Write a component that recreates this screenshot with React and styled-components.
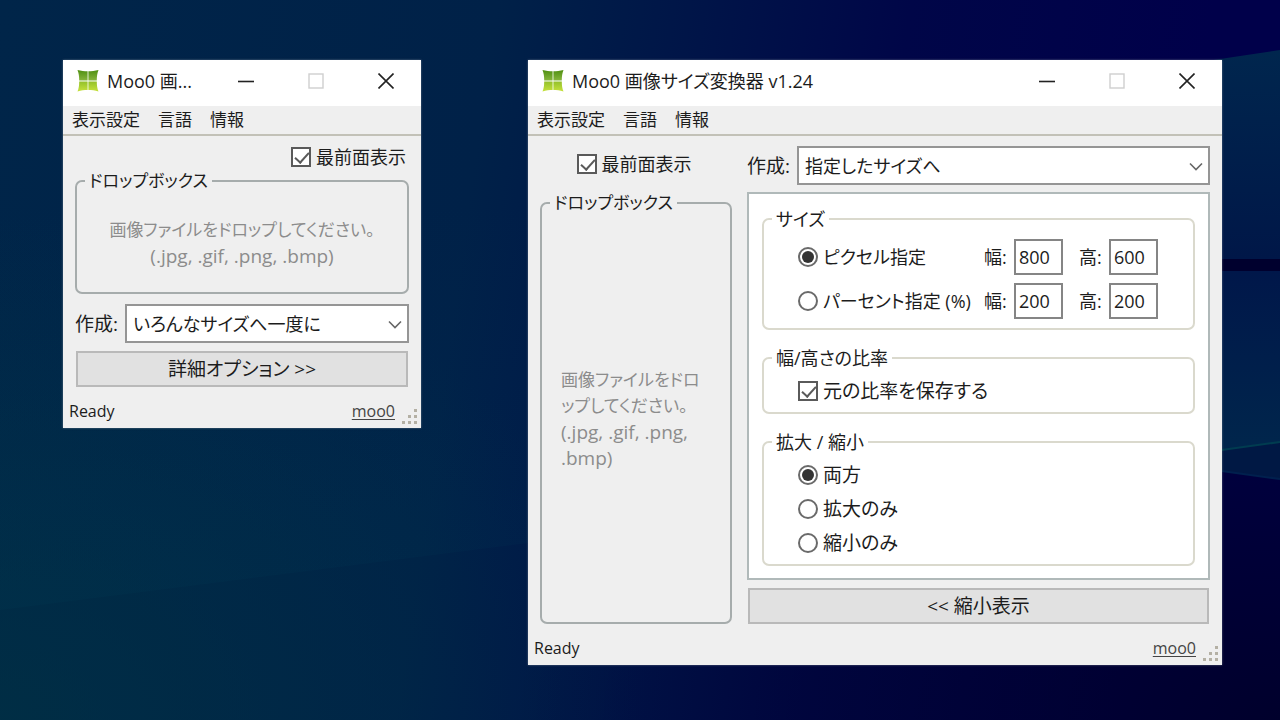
import React, { useState } from 'react';
import styled, { createGlobalStyle } from 'styled-components';

const GlobalStyle = createGlobalStyle`
  * {
    box-sizing: border-box;
  }

  body {
    margin: 0;
    background: #001a42;
    font-family: "Open Sans", "Noto Sans CJK JP", sans-serif;
    font-size: 18px;
    line-height: 24px;
    color: #1c1c1c;
    font-feature-settings: "palt";
  }

  button, input, select {
    font: inherit;
    font-feature-settings: inherit;
    color: inherit;
    margin: 0;
  }
`;

const Logo = () => (
  <svg width="22" height="22" viewBox="0 0 22 22" aria-hidden="true">
    <defs>
      <linearGradient id="leafTop" x1="0" y1="0" x2="0" y2="1">
        <stop offset="0" stopColor="#4f8f12" />
        <stop offset="1" stopColor="#86b53c" />
      </linearGradient>
      <linearGradient id="leafBottom" x1="0" y1="0" x2="0" y2="1">
        <stop offset="0" stopColor="#93c02a" />
        <stop offset="1" stopColor="#c6e23c" />
      </linearGradient>
    </defs>
    <path fill="url(#leafTop)" d="M0.5 0C4 1 7.5 1.2 10.6 1.2V10.4H2.2C2.2 7 1.8 3 0.5 0Z" />
    <path fill="url(#leafTop)" d="M21.5 0C18 1 14.5 1.2 11.4 1.2V10.4H19.8C19.8 7 20.2 3 21.5 0Z" />
    <path fill="url(#leafBottom)" d="M2.2 11.4H10.6V20C7.5 20 4 20.4 0.5 21.5C1.8 18.5 2.2 15 2.2 11.4Z" />
    <path fill="url(#leafBottom)" d="M19.8 11.4H11.4V20C14.5 20 18 20.4 21.5 21.5C20.2 18.5 19.8 15 19.8 11.4Z" />
  </svg>
);

const TitleBar = ({ title }) => (
  <TitleRow>
    <Logo />
    <Title>{title}</Title>
    <CaptionButton aria-label="最小化">
      <svg width="16" height="16" viewBox="0 0 16 16"><path d="M0 8.5H16" stroke="#222" strokeWidth="1.6" /></svg>
    </CaptionButton>
    <CaptionButton aria-label="最大化" disabled>
      <svg width="16" height="16" viewBox="0 0 16 16"><rect x="1" y="1" width="14" height="14" fill="none" stroke="#cfcfcf" strokeWidth="1.4" /></svg>
    </CaptionButton>
    <CaptionButton aria-label="閉じる">
      <svg width="16" height="16" viewBox="0 0 16 16"><path d="M0.5 0.5L15.5 15.5M15.5 0.5L0.5 15.5" stroke="#222" strokeWidth="1.6" /></svg>
    </CaptionButton>
  </TitleRow>
);

const Menu = () => (
  <MenuBar>
    <MenuButton>表示設定</MenuButton>
    <MenuButton>言語</MenuButton>
    <MenuButton>情報</MenuButton>
  </MenuBar>
);

const Status = () => (
  <StatusBar>
    <span>Ready</span>
    <StatusLink href="#moo0">moo0</StatusLink>
    <svg width="17" height="17" viewBox="0 0 17 17" fill="#b4b0a4" aria-hidden="true">
      <path d="M12 1h3v3h-3zM6 7h3v3H6zM12 7h3v3h-3zM0 13h3v3H0zM6 13h3v3H6zM12 13h3v3h-3z" />
    </svg>
  </StatusBar>
);

const Combo = ({ id, options }) => (
  <ComboRow>
    <ComboLabel htmlFor={id}>作成:</ComboLabel>
    <SelectWrap>
      <Select id={id}>
        {options.map(o => <option key={o}>{o}</option>)}
      </Select>
      <Chevron width="14" height="9" viewBox="0 0 14 9" aria-hidden="true">
        <path d="M1 1.5L7 7.5L13 1.5" fill="none" stroke="#666" strokeWidth="1.6" />
      </Chevron>
    </SelectWrap>
  </ComboRow>
);

const App = () => {
  const [top, setTop] = useState(true);
  const [keep, setKeep] = useState(true);
  const [unit, setUnit] = useState('pixel');
  const [mode, setMode] = useState('both');

  const units = [
    { id: 'pixel', label: 'ピクセル指定', w: '800', h: '600' },
    { id: 'percent', label: 'パーセント指定 (%)', w: '200', h: '200' },
  ];

  const modes = [
    { id: 'both', label: '両方' },
    { id: 'up', label: '拡大のみ' },
    { id: 'down', label: '縮小のみ' },
  ];

  const onTop = (
    <Choice>
      <CheckBox checked={top} onChange={() => setTop(!top)} />
      最前面表示
    </Choice>
  );

  return (
    <>
      <GlobalStyle />
      <Desktop>
        <Wallpaper viewBox="0 0 1280 720" preserveAspectRatio="none" aria-hidden="true">
          <defs>
            <linearGradient id="ray" x1="0" y1="1" x2="0" y2="0">
              <stop offset="0" stopColor="#004a60" stopOpacity="0.1" />
              <stop offset="1" stopColor="#004a60" stopOpacity="0" />
            </linearGradient>
            <linearGradient id="paneTop" x1="0" y1="0" x2="0" y2="1">
              <stop offset="0" stopColor="#00264e" />
              <stop offset="1" stopColor="#001748" />
            </linearGradient>
            <linearGradient id="paneBottom" x1="0" y1="0" x2="0" y2="1">
              <stop offset="0" stopColor="#00174a" />
              <stop offset="1" stopColor="#00264c" />
            </linearGradient>
          </defs>
          <path d="M0 610L528 543V200H0Z" fill="url(#ray)" />
          <path d="M1200 62L1280 50V259H1200Z" fill="url(#paneTop)" />
          <path d="M1200 271H1280V442L1200 453Z" fill="url(#paneBottom)" />
          <path d="M1200 453L1280 442V479L1200 468Z" fill="#001844" />
          <path d="M1200 265H1280" stroke="#00002e" strokeWidth="12" />
          <path d="M1200 453L1280 442" stroke="#003c50" strokeWidth="2" />
          <path d="M1200 468L1280 479" stroke="#00204e" strokeWidth="2" />
        </Wallpaper>

        <CompactWindow>
          <TitleBar title="Moo0 画..." />
          <Menu />
          <CompactBody>
            <TopRow>{onTop}</TopRow>
            <Group>
              <Legend>ドロップボックス</Legend>
              <CompactHint>
                画像ファイルをドロップしてください。<br />
                <FileTypes>(.jpg, .gif, .png, .bmp)</FileTypes>
              </CompactHint>
            </Group>
            <Combo id="make-compact" options={['いろんなサイズへ一度に', '指定したサイズへ']} />
            <PushButton>詳細オプション &gt;&gt;</PushButton>
          </CompactBody>
          <Status />
        </CompactWindow>

        <DetailWindow>
          <TitleBar title="Moo0 画像サイズ変換器 v1.24" />
          <Menu />
          <DetailBody>
            <DropColumn>
              {onTop}
              <Group>
                <Legend>ドロップボックス</Legend>
                <DetailHint>
                  画像ファイルをドロ<br />ップしてください。<br />
                  <FileTypes>(.jpg, .gif, .png,<br />.bmp)</FileTypes>
                </DetailHint>
              </Group>
            </DropColumn>
            <OptionColumn>
              <Combo id="make-detail" options={['指定したサイズへ', 'いろんなサイズへ一度に']} />
              <Panel>
                <Group $soft>
                  <Legend $soft>サイズ</Legend>
                  <SizeRows>
                    {units.map(u => (
                      <SizeRow key={u.id}>
                        <Choice>
                          <Radio name="unit" checked={unit === u.id} onChange={() => setUnit(u.id)} />
                          {u.label}
                        </Choice>
                        <label htmlFor={`${u.id}-w`}>幅:</label>
                        <NumberBox id={`${u.id}-w`} defaultValue={u.w} />
                        <label htmlFor={`${u.id}-h`}>高:</label>
                        <NumberBox id={`${u.id}-h`} defaultValue={u.h} />
                      </SizeRow>
                    ))}
                  </SizeRows>
                </Group>
                <Group $soft>
                  <Legend $soft>幅/高さの比率</Legend>
                  <ChoiceList>
                    <Choice>
                      <CheckBox checked={keep} onChange={() => setKeep(!keep)} />
                      元の比率を保存する
                    </Choice>
                  </ChoiceList>
                </Group>
                <Group $soft>
                  <Legend $soft>拡大 / 縮小</Legend>
                  <ChoiceList>
                    {modes.map(m => (
                      <Choice key={m.id}>
                        <Radio name="mode" checked={mode === m.id} onChange={() => setMode(m.id)} />
                        {m.label}
                      </Choice>
                    ))}
                  </ChoiceList>
                </Group>
              </Panel>
              <PushButton>&lt;&lt; 縮小表示</PushButton>
            </OptionColumn>
          </DetailBody>
          <Status />
        </DetailWindow>
      </Desktop>
    </>
  );
};

const Desktop = styled.div`
  position: relative;
  display: flex;
  align-items: flex-start;
  gap: 107px;
  min-height: 100vh;
  padding: 60px 58px 55px 63px;
  overflow: hidden;
  background:
    radial-gradient(ellipse 60% 60% at 100% 100%, rgba(0, 0, 24, 0.6), rgba(0, 0, 24, 0)),
    radial-gradient(ellipse 50% 70% at 0% 100%, rgba(0, 52, 66, 0.6), rgba(0, 52, 66, 0)),
    linear-gradient(98deg, #002549 0%, #002148 36%, #001548 50%, #000648 66%, #00004a 88%, #00004a 100%);
`;

const Wallpaper = styled.svg`
  position: absolute;
  inset: 0;
  width: 100%;
  height: 100%;
`;

const Window = styled.section`
  position: relative;
  display: flex;
  flex-direction: column;
  background: #efefef;
  box-shadow: 0 0 2px rgba(150, 160, 170, 0.6);
`;

const CompactWindow = styled(Window)`
  flex: 0 0 358px;
`;

const DetailWindow = styled(Window)`
  flex: 1;
`;

const TitleRow = styled.header`
  display: flex;
  align-items: center;
  height: 46px;
  padding: 0 0 4px 14px;
  background: #fff;
`;

const Title = styled.h1`
  flex: 1;
  margin: 0 0 0 8px;
  font-size: 18px;
  font-weight: 400;
  white-space: nowrap;
`;

const CaptionButton = styled.button`
  display: grid;
  place-items: center;
  width: 70px;
  height: 42px;
  padding: 0;
  border: 0;
  background: none;
`;

const MenuBar = styled.nav`
  display: flex;
  gap: 18px;
  height: 30px;
  padding: 0 9px;
  border-bottom: 2px solid #c2c1b7;
`;

const MenuButton = styled.button`
  padding: 0;
  border: 0;
  background: none;
  font-size: 17px;
`;

const CompactBody = styled.div`
  display: flex;
  flex-direction: column;
  padding: 11px 12px 0;

  fieldset {
    height: 125px;
    margin: 2px 0 10px;
  }

  button {
    margin-top: 8px;
  }
`;

const TopRow = styled.div`
  display: flex;
  justify-content: flex-end;
  padding-right: 3px;
`;

const DetailBody = styled.div`
  display: grid;
  grid-template-columns: 192px 1fr;
  gap: 15px;
  padding: 10px 12px 0;
`;

const DropColumn = styled.div`
  display: flex;
  flex-direction: column;
  align-items: center;
  gap: 17px;
  padding-top: 8px;

  label {
    padding-right: 4px;
  }

  fieldset {
    flex: 1;
    align-self: stretch;
  }
`;

const OptionColumn = styled.div`
  display: flex;
  flex-direction: column;
  gap: 7px;
`;

const Group = styled.fieldset`
  min-width: 0;
  margin: 0;
  padding: 0 8px;
  border: 2px solid ${p => (p.$soft ? '#dad9cd' : '#a6acac')};
  border-radius: 7px;
`;

const Legend = styled.legend`
  height: 24px;
  padding: 0 4px;
  font-size: ${p => (p.$soft ? 18 : 17)}px;
  white-space: nowrap;
`;

const Hint = styled.p`
  margin: 0;
  color: #8c8c8c;
  font-size: 17px;
  line-height: 26px;
  white-space: nowrap;
`;

const CompactHint = styled(Hint)`
  padding-top: 24px;
  text-align: center;
`;

const DetailHint = styled(Hint)`
  display: flex;
  flex-direction: column;
  justify-content: center;
  height: 100%;
  padding-left: 11px;
`;

const FileTypes = styled.span`
  font-size: 19px;
`;

const ComboRow = styled.div`
  display: flex;
  align-items: center;
  gap: 7px;
`;

const ComboLabel = styled.label`
  font-size: 19px;
`;

const SelectWrap = styled.div`
  position: relative;
  flex: 1;
`;

const Select = styled.select`
  display: block;
  width: 100%;
  height: 39px;
  padding: 0 30px 0 6px;
  border: 2px solid #959595;
  border-radius: 0;
  background: #fff;
  appearance: none;
`;

const Chevron = styled.svg`
  position: absolute;
  right: 7px;
  top: 16px;
  pointer-events: none;
`;

const PushButton = styled.button`
  height: 36px;
  margin: 0 1px;
  padding: 0;
  border: 2px solid #b9b9b9;
  background: #e1e1e1;
  font-size: 19px;
`;

const Panel = styled.div`
  display: flex;
  flex-direction: column;
  gap: 16px;
  margin-bottom: 1px;
  padding: 13px 13px 12px;
  border: 2px solid #b0b9b9;
  background: #fff;
`;

const SizeRows = styled.div`
  display: flex;
  flex-direction: column;
  gap: 8px;
  padding: 8px 0 9px 26px;
`;

const SizeRow = styled.div`
  display: grid;
  grid-template-columns: 186px 30px 65px 30px 49px;
  align-items: center;
`;

const ChoiceList = styled.div`
  display: flex;
  flex-direction: column;
  gap: 14px;
  padding: 11px 0 11px 26px;
  font-size: 19px;
`;

const Choice = styled.label`
  display: flex;
  align-items: center;
  gap: 5px;
  height: 20px;
  white-space: nowrap;
`;

const CheckBox = styled.input.attrs({ type: 'checkbox' })`
  position: relative;
  width: 20px;
  height: 20px;
  border: 2px solid #5a5a5a;
  background: #fff;
  appearance: none;

  &:checked::after {
    content: "";
    position: absolute;
    left: 5px;
    top: 0;
    width: 6px;
    height: 12px;
    border: solid #5a5a5a;
    border-width: 0 2px 2px 0;
    transform: rotate(42deg);
  }
`;

const Radio = styled.input.attrs({ type: 'radio' })`
  display: grid;
  place-items: center;
  width: 20px;
  height: 20px;
  border: 2px solid #6a6a6a;
  border-radius: 50%;
  background: #fff;
  appearance: none;

  &:checked::after {
    content: "";
    width: 12px;
    height: 12px;
    border-radius: 50%;
    background: #333;
  }
`;

const NumberBox = styled.input.attrs({ type: 'text' })`
  width: 49px;
  height: 36px;
  padding: 0 3px;
  border: 2px solid #858585;
  background: #fff;
`;

const StatusBar = styled.footer`
  display: flex;
  align-items: center;
  height: 41px;
  padding: 7px 2px 0 6px;
  font-size: 16px;

  svg {
    align-self: flex-end;
    margin: 0 0 3px 7px;
  }
`;

const StatusLink = styled.a`
  margin-left: auto;
  color: #444;
  text-underline-offset: 2px;
`;

export default App;
